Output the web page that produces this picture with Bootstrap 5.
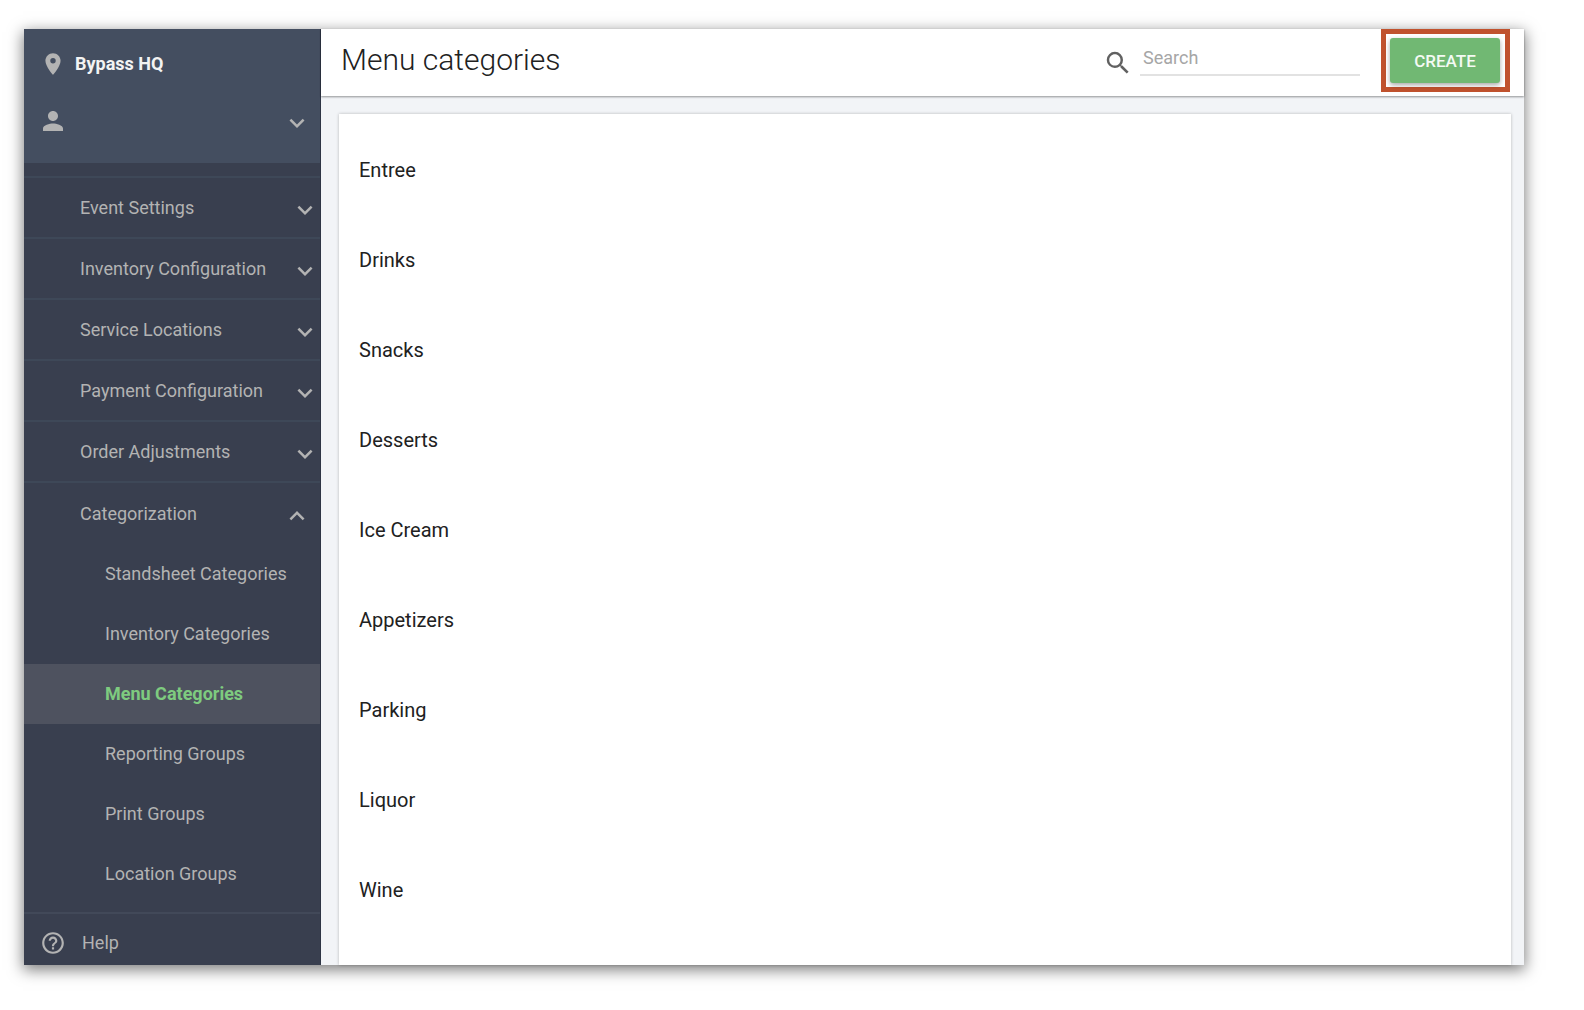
<!DOCTYPE html>
<html lang="en">
<head>
<meta charset="utf-8">
<meta name="viewport" content="width=device-width, initial-scale=1">
<title>Menu categories</title>
<link href="https://cdn.jsdelivr.net/npm/bootstrap@5.3.0/dist/css/bootstrap.min.css" rel="stylesheet">
<script src="https://cdn.jsdelivr.net/npm/bootstrap@5.3.0/dist/js/bootstrap.bundle.min.js" defer></script>
<style>
  body { font-family: Roboto, "Liberation Sans", sans-serif; background: #fff; padding: 29px 60px 45px 24px; }
  .app-window { box-shadow: 0 4px 14px 1px rgba(0,0,0,.5); background: #f2f4f7; }
  .side { width: 297px; background: #393f4f; color: #b3b3b3; font-size: 18px; line-height: 24px; border-right: 1px solid #2e3545; }
  .side svg, .top-bar svg { fill: currentColor; flex: none; }
  .side-head { background: #444e60; height: 134px; padding: 22px 8px 0 14px; }
  .venue { height: 26px; padding-left: 2px; gap: 9px; color: #b3b3b3; }
  .venue span { color: #f3f3f3; }
  .account { color: #b3b3b3; margin-top: 27px; }
  .account, .side-row, .side-sub, .side-help { width: 100%; border: 0; background: none; text-align: left; text-decoration: none; color: #b3b3b3; }
  .side-list { padding-top: 13px; }
  .side-row { height: 61px; padding: 0 0 0 56px; border-top: 2px solid #3e4858; }
  .side-row.open { height: 63px; padding-right: 8px; }
  .side-row svg { margin-top: 4px; }
  .side-sub { height: 60px; padding-left: 81px; }
  .side-sub.active { background: #4e525f; color: #7ecb7f; }
  .side-help { height: 53px; padding: 7px 0 0 16px; gap: 16px; border-top: 2px solid #424959; }
  .top-bar { height: 67px; background: #fff; padding: 0 14px 0 20px; box-shadow: 0 1px 2px rgba(0,0,0,.4); }
  .top-bar h1 { font-size: 30px; line-height: 36px; font-weight: 300; color: #212121; padding-bottom: 6px; }
  .search-label { color: #616161; }
  .search-box { width: 220px; height: 39px; margin: 0 21px 0 7px; padding: 3px 3px 0; font-size: 18px; border: 0; border-bottom: 2px solid #e2e2e2; border-radius: 0; }
  .search-box::placeholder { color: #a6a6a6; }
  .create-frame { border: 5px solid #c0522e; padding: 4px 5px 4px 4px; height: 63px; }
  .create-btn { width: 110px; height: 45px; background: #71b873; color: #f4faf4; font-size: 17px; line-height: 24px; border: 0; border-radius: 3px; box-shadow: 0 2px 5px rgba(0,0,0,.35); padding: 0; }
  .create-btn:hover { background: #64aa66; color: #fff; }
  .category-card { margin: 18px 13px 0 18px; padding-top: 11px; background: #fff; box-shadow: 0 0 3px rgba(0,0,0,.25); }
  .category-card li { height: 90px; padding: 0 20px; font-size: 20px; line-height: 28px; color: #212121; }
</style>
</head>
<body class="min-vh-100 d-flex">
<svg class="d-none" aria-hidden="true">
  <symbol id="down" viewBox="0 0 24 24"><path d="M16.59 8.59 12 13.17 7.41 8.59 6 10l6 6 6-6z"/></symbol>
  <symbol id="up" viewBox="0 0 24 24"><path d="m12 8-6 6 1.41 1.41L12 10.83l4.59 4.58L18 14z"/></symbol>
</svg>
<div class="app-window d-flex flex-fill">
  <aside class="side d-flex flex-column flex-shrink-0">
    <div class="side-head">
      <div class="venue d-flex align-items-center">
        <svg width="26" height="26" viewBox="0 0 24 24"><path d="M12 2C8.13 2 5 5.13 5 9c0 5.25 7 13 7 13s7-7.75 7-13c0-3.87-3.13-7-7-7zm0 9.500a2.500 2.500 0 1 1 0-5 2.500 2.500 0 0 1 0 5z"/></svg>
        <span class="fw-bold">Bypass HQ</span>
      </div>
      <button class="account d-flex align-items-center justify-content-between p-0" type="button" aria-label="Account">
        <svg width="30" height="30" viewBox="0 0 24 24"><path d="M12 12c2.210 0 4-1.790 4-4s-1.790-4-4-4-4 1.790-4 4 1.790 4 4 4zm0 2c-2.670 0-8 1.340-8 4v2h16v-2c0-2.660-5.330-4-8-4z"/></svg>
        <svg class="mt-1" width="30" height="30"><use href="#down"/></svg>
      </button>
    </div>
    <nav class="side-list d-flex flex-column">
      <button class="side-row d-flex align-items-center justify-content-between" type="button">Event Settings<svg width="30" height="30"><use href="#down"/></svg></button>
      <button class="side-row d-flex align-items-center justify-content-between" type="button">Inventory Configuration<svg width="30" height="30"><use href="#down"/></svg></button>
      <button class="side-row d-flex align-items-center justify-content-between" type="button">Service Locations<svg width="30" height="30"><use href="#down"/></svg></button>
      <button class="side-row d-flex align-items-center justify-content-between" type="button">Payment Configuration<svg width="30" height="30"><use href="#down"/></svg></button>
      <button class="side-row d-flex align-items-center justify-content-between" type="button">Order Adjustments<svg width="30" height="30"><use href="#down"/></svg></button>
      <button class="side-row open d-flex align-items-center justify-content-between" type="button" aria-expanded="true">Categorization<svg width="30" height="30"><use href="#up"/></svg></button>
      <a class="side-sub d-flex align-items-center" href="#">Standsheet Categories</a>
      <a class="side-sub d-flex align-items-center" href="#">Inventory Categories</a>
      <a class="side-sub active fw-bold d-flex align-items-center" href="#" aria-current="page">Menu Categories</a>
      <a class="side-sub d-flex align-items-center" href="#">Reporting Groups</a>
      <a class="side-sub d-flex align-items-center" href="#">Print Groups</a>
      <a class="side-sub d-flex align-items-center" href="#">Location Groups</a>
    </nav>
    <a class="side-help d-flex align-items-center mt-auto" href="#">
      <svg width="26" height="26" viewBox="0 0 24 24"><path d="M11 18h2v-2h-2v2zm1-16C6.480 2 2 6.480 2 12s4.480 10 10 10 10-4.480 10-10S17.520 2 12 2zm0 18c-4.410 0-8-3.590-8-8s3.590-8 8-8 8 3.590 8 8-3.590 8-8 8zm0-14c-2.210 0-4 1.790-4 4h2c0-1.100.9-2 2-2s2 .9 2 2c0 2-3 1.750-3 5h2c0-2.250 3-2.500 3-5 0-2.210-1.790-4-4-4z"/></svg>
      <span>Help</span>
    </a>
  </aside>
  <main class="d-flex flex-column flex-fill">
    <header class="top-bar d-flex">
      <h1 class="m-0 me-auto align-self-center">Menu categories</h1>
      <label class="search-label align-self-center" for="search" aria-label="Search"><svg width="30" height="30" viewBox="0 0 24 24"><path d="M15.500 14h-.79l-.28-.27A6.470 6.470 0 0 0 16 9.500 6.500 6.500 0 1 0 9.500 16c1.610 0 3.090-.59 4.230-1.570l.27.28v.79l5 4.990L20.490 19l-4.990-5zm-6 0C7.010 14 5 11.990 5 9.500S7.010 5 9.500 5 14 7.010 14 9.500 11.990 14 9.500 14z"/></svg></label>
      <input class="search-box form-control mt-2" id="search" type="search" placeholder="Search">
      <div class="create-frame"><button class="create-btn btn fw-medium" type="button">CREATE</button></div>
    </header>
    <section class="category-card flex-fill">
      <ul class="list-unstyled m-0">
        <li class="d-flex align-items-center">Entree</li>
        <li class="d-flex align-items-center">Drinks</li>
        <li class="d-flex align-items-center">Snacks</li>
        <li class="d-flex align-items-center">Desserts</li>
        <li class="d-flex align-items-center">Ice Cream</li>
        <li class="d-flex align-items-center">Appetizers</li>
        <li class="d-flex align-items-center">Parking</li>
        <li class="d-flex align-items-center">Liquor</li>
        <li class="d-flex align-items-center">Wine</li>
      </ul>
    </section>
  </main>
</div>
</body>
</html>
